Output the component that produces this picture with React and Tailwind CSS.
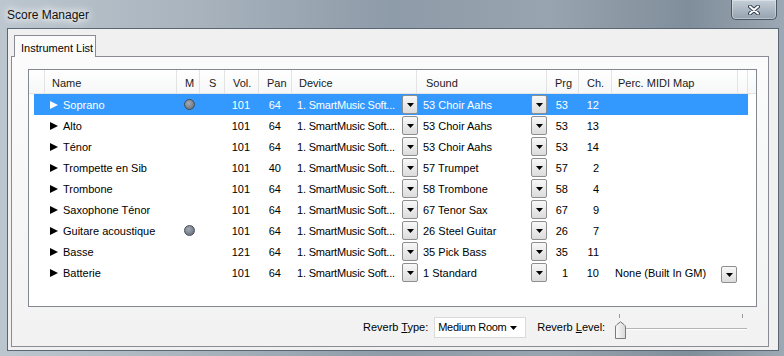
import React from 'react';

const headCols = [
  ['', 'w-[16px]'],
  ['Name', 'w-[132px] pl-[7px]'],
  ['M', 'w-[23px] pl-[8px]'],
  ['S', 'w-[25px] pl-[9px]'],
  ['Vol.', 'w-[34px] pl-[8px]'],
  ['Pan', 'w-[33px] pl-[8px]'],
  ['Device', 'w-[125px] pl-[7px]'],
  ['Sound', 'w-[130px] pl-[9px]'],
  ['Prg', 'w-[32px] pl-[8px]'],
  ['Ch.', 'w-[33px] pl-[8px]'],
  ['Perc. MIDI Map', 'w-[126px] pl-[6px]'],
  ['', 'w-[10px]'],
];

const rows = [
  { name: 'Soprano', m: true, vol: 101, pan: 64, sound: '53 Choir Aahs', prg: 53, ch: 12, sel: true },
  { name: 'Alto', vol: 101, pan: 64, sound: '53 Choir Aahs', prg: 53, ch: 13 },
  { name: 'Ténor', vol: 101, pan: 64, sound: '53 Choir Aahs', prg: 53, ch: 14 },
  { name: 'Trompette en Sib', vol: 101, pan: 40, sound: '57 Trumpet', prg: 57, ch: 2 },
  { name: 'Trombone', vol: 101, pan: 64, sound: '58 Trombone', prg: 58, ch: 4 },
  { name: 'Saxophone Ténor', vol: 101, pan: 64, sound: '67 Tenor Sax', prg: 67, ch: 9 },
  { name: 'Guitare acoustique', m: true, vol: 101, pan: 64, sound: '26 Steel Guitar', prg: 26, ch: 7 },
  { name: 'Basse', vol: 121, pan: 64, sound: '35 Pick Bass', prg: 35, ch: 11 },
  { name: 'Batterie', vol: 101, pan: 64, sound: '1 Standard', prg: 1, ch: 10, perc: 'None (Built In GM)' },
];

function DownArrow() {
  return (
    <svg width="7" height="4" viewBox="0 0 7 4" className="shrink-0">
      <polygon points="0,0 7,0 3.5,4" fill="#000" />
    </svg>
  );
}

function DropBtn({ className = '' }) {
  return (
    <div
      className={`w-[16px] shrink-0 flex items-center justify-center border border-[#8e8e8e] rounded-[2px] bg-linear-to-b from-[#f8f8f8] to-[#dcdcdc] ${className}`}
    >
      <DownArrow />
    </div>
  );
}

function Row({ r }) {
  return (
    <div
      className={`flex h-[21px] w-[714px] ml-[5px] items-center ${
        r.sel ? 'bg-[#3399ff] text-white' : 'text-black'
      }`}
    >
      <div className="w-[11px] shrink-0" />
      <div className="w-[132px] shrink-0 flex items-center pl-[5px] pt-px whitespace-nowrap">
        <svg width="8" height="8" viewBox="0 0 8 8">
          <polygon points="0,0 8,4 0,8" fill={r.sel ? '#fff' : '#000'} />
        </svg>
        <span className="ml-[5px]">{r.name}</span>
      </div>
      <div className="w-[23px] shrink-0 flex justify-center pl-px">
        {r.m && (
          <div className="w-[11px] h-[11px] rounded-full border border-[#444c55] bg-[radial-gradient(circle_at_40%_35%,#a3acb5,#5c6671)]" />
        )}
      </div>
      <div className="w-[25px] shrink-0" />
      <div className="w-[34px] shrink-0 text-right pr-[9px] pt-px">{r.vol}</div>
      <div className="w-[33px] shrink-0 text-right pr-[11px] pt-px">{r.pan}</div>
      <div className="w-[125px] shrink-0 h-full flex items-center justify-between pl-[5px]">
        <span className="whitespace-nowrap tracking-[-0.2px] pt-px">1. SmartMusic Soft...</span>
        <DropBtn className="h-[19px] mr-[-1px]" />
      </div>
      <div className="w-[130px] shrink-0 h-full flex items-center justify-between pl-[6px]">
        <span className="whitespace-nowrap pt-px">{r.sound}</span>
        <DropBtn className="h-[19px]" />
      </div>
      <div className="w-[32px] shrink-0 text-right pr-[11px] pt-px">{r.prg}</div>
      <div className="w-[33px] shrink-0 text-right pr-[13px] pt-px">{r.ch}</div>
      <div className="w-[126px] shrink-0 h-full flex items-center justify-between pl-[3px]">
        {r.perc && (
          <>
            <span className="whitespace-nowrap pt-px">{r.perc}</span>
            <DropBtn className="h-[17px] mt-[4px] mr-[1px]" />
          </>
        )}
      </div>
      <div className="w-[10px] shrink-0" />
    </div>
  );
}

export default function App() {
  return (
    <div className="w-[784px] h-[356px] overflow-hidden font-['Liberation_Sans',Arial,sans-serif] text-[11px] bg-[linear-gradient(90deg,#bcc6cf_0%,#a8b3bd_25%,#8e9ba8_50%,#98a4af_70%,#808e9b_88%,#9ca8b3_100%)]">
      {/* title bar */}
      <div className="h-[28px] flex items-start justify-between">
        <span className="mt-[6px] ml-[7px] text-[12px] text-[#111] [text-shadow:0_0_6px_#fff,0_0_10px_#fff,0_0_14px_#fff]">
          Score Manager
        </span>
        <div className="w-[46px] h-[20px] mr-[7px] flex items-center justify-center border border-t-0 border-[#4a5764] rounded-b-[5px] bg-linear-to-b from-[#c6cfd8] to-[#94a2af] shadow-[inset_0_0_0_1px_rgba(255,255,255,0.35)]">
          <svg width="12" height="10" viewBox="0 0 12 10">
            <path d="M2 1.5 L10 8.5 M10 1.5 L2 8.5" stroke="#34414e" strokeWidth="4" strokeLinecap="round" />
            <path d="M2 1.5 L10 8.5 M10 1.5 L2 8.5" stroke="#fff" strokeWidth="2" strokeLinecap="round" />
          </svg>
        </div>
      </div>

      {/* client area */}
      <div className="ml-[7px] w-[772px] h-[323px] border border-[#5a6673] bg-[#f0f0f0] flex flex-col">
        {/* tab strip */}
        <div className="flex mt-[6px] h-[21px] relative z-10">
          <div className="ml-[6px] w-[82px] h-[22px] border border-b-0 border-[#898c95] bg-[#fbfbfb] pl-[6px] pt-[4px] text-black whitespace-nowrap">
            Instrument List
          </div>
        </div>

        {/* tab panel */}
        <div className="ml-[3px] w-[758px] h-[291px] border border-[#898c95] bg-linear-to-b from-[#fbfbfb] to-[#f2f2f2] flex flex-col">
          {/* list view */}
          <div className="ml-[16px] mt-[12px] w-[729px] h-[238px] border border-[#828790] bg-white overflow-hidden">
            <div className="flex h-[24px] bg-linear-to-b from-white to-[#f6f7f8] border-b border-[#e5e5e5] text-[#1a1a1a]">
              {headCols.map(([label, cls], i) => (
                <div key={i} className={`${cls} shrink-0 h-full flex items-center pt-[3px] border-r border-[#e3e3e3] whitespace-nowrap`}>
                  {label}
                </div>
              ))}
            </div>
            {rows.map((r) => (
              <Row key={r.name} r={r} />
            ))}
          </div>

          {/* bottom controls */}
          <div className="flex items-center h-[21px] mt-[10px] ml-[351px] text-black">
            <span className="whitespace-nowrap">
              Reverb <u>T</u>ype:
            </span>
            <div className="ml-[6px] w-[92px] h-[21px] shrink-0 bg-white border border-[#dadada] flex items-center justify-between pl-[3px] pr-[8px]">
              <span className="whitespace-nowrap tracking-[-0.3px]">Medium Room</span>
              <DownArrow />
            </div>
            <span className="ml-[11px] whitespace-nowrap">
              Reverb <u>L</u>evel:
            </span>
            <div className="relative ml-[6px] w-[140px] h-[30px] shrink-0">
              <div className="absolute left-[8px] top-[1px] w-px h-[4px] bg-[#9a9a9a]" />
              <div className="absolute left-[131px] top-[1px] w-px h-[4px] bg-[#9a9a9a]" />
              <div className="absolute left-[10px] top-[15px] w-[126px] h-[2px] border-t border-[#b4b4b4] border-b border-b-white" />
              <svg className="absolute left-[4px] top-[8px]" width="11" height="18" viewBox="0 0 11 18">
                <defs>
                  <linearGradient id="thumb" x1="0" y1="0" x2="1" y2="0">
                    <stop offset="0" stopColor="#fafafa" />
                    <stop offset="1" stopColor="#d8d8d8" />
                  </linearGradient>
                </defs>
                <path
                  d="M0.5 17.5 V6 Q0.5 4.5 2 3.5 L5.5 0.8 L9 3.5 Q10.5 4.5 10.5 6 V17.5 Z"
                  fill="url(#thumb)"
                  stroke="#7a7a7a"
                />
              </svg>
            </div>
          </div>
        </div>
      </div>
    </div>
  );
}
